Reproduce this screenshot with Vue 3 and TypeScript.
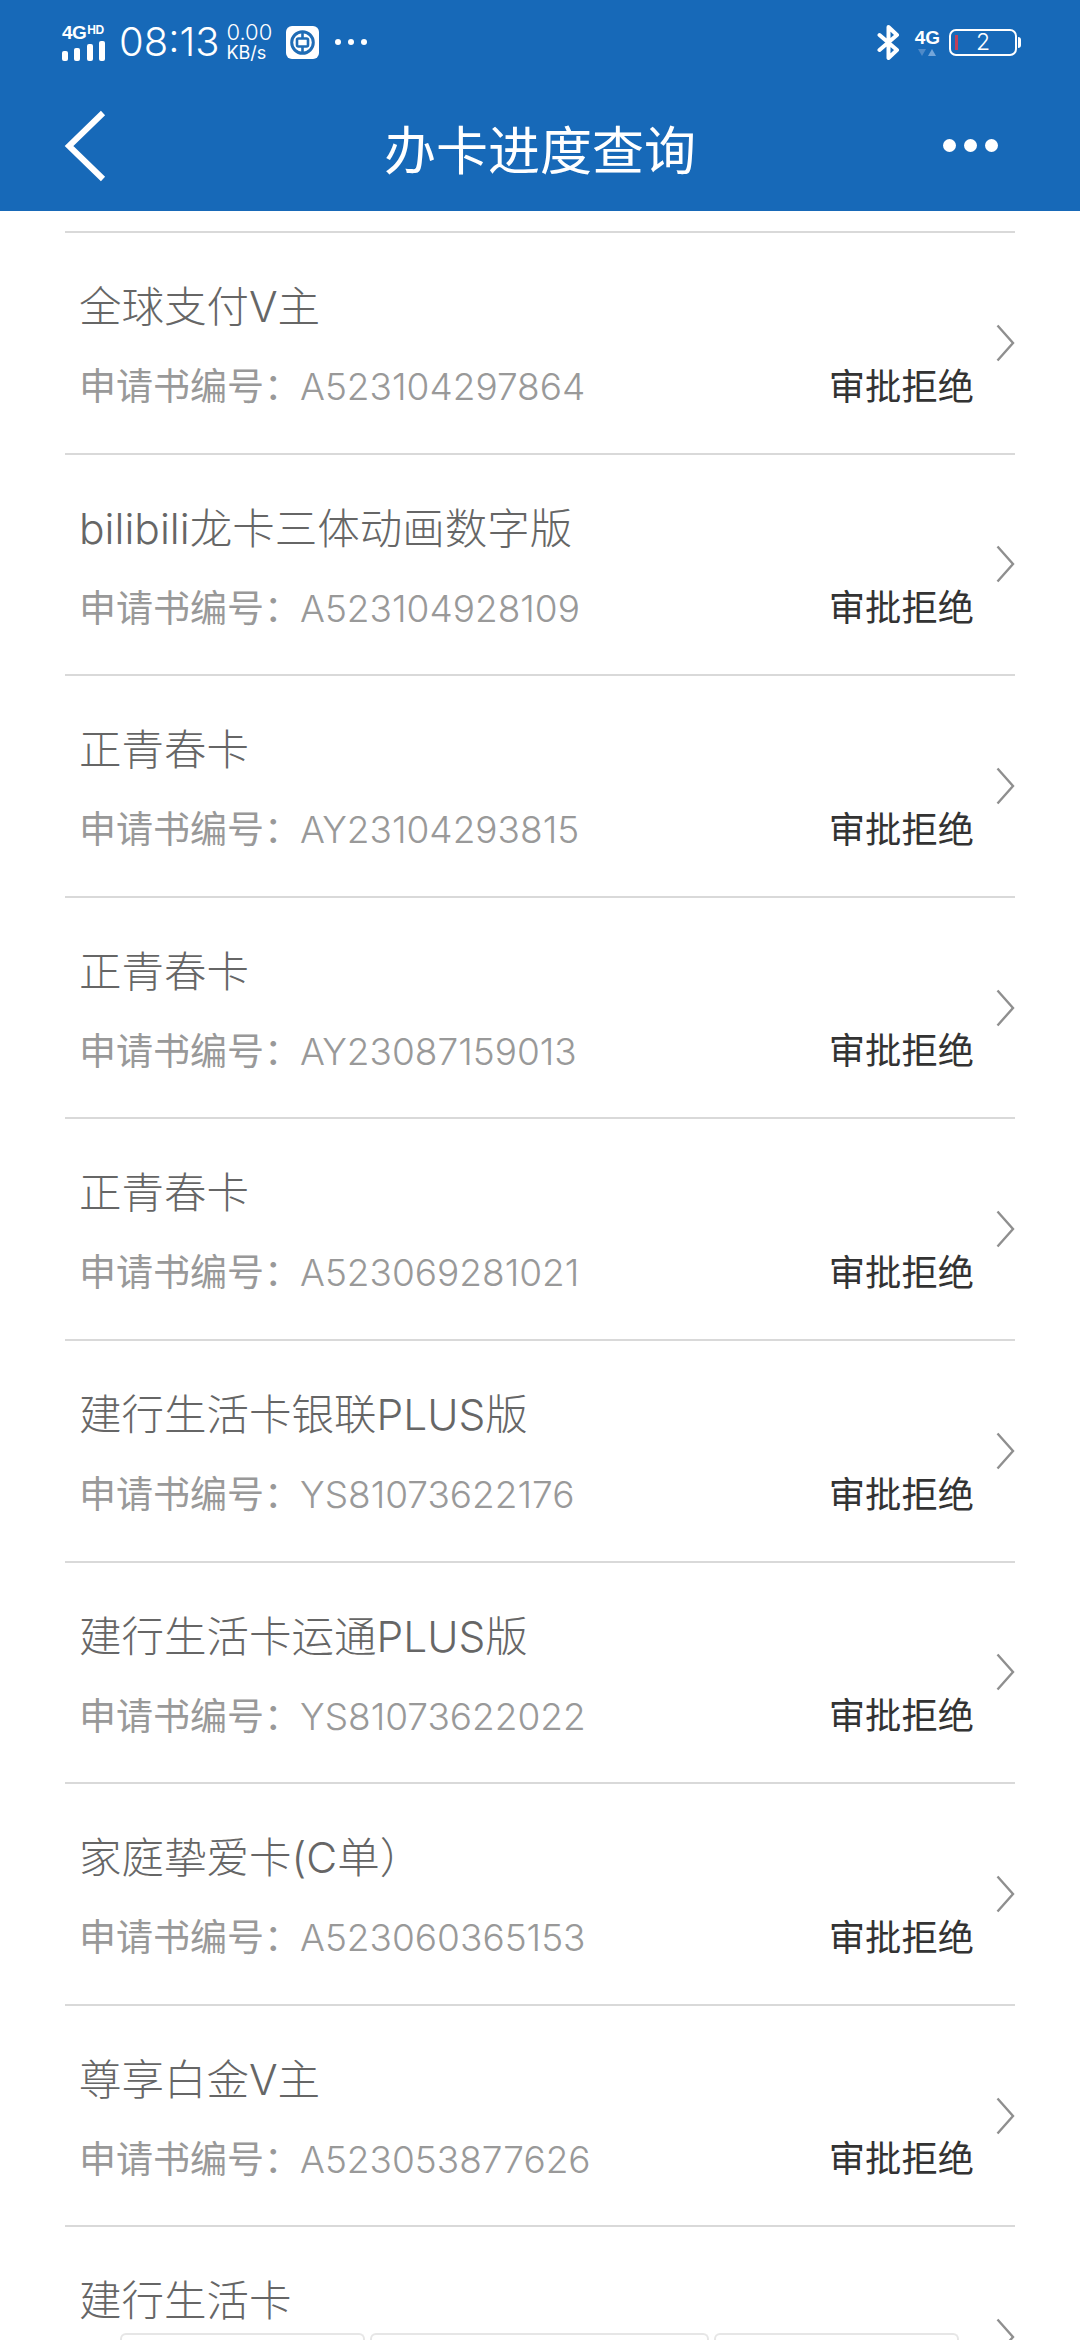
<template>
  <div class="page">
    <header class="top">
      <div class="status-bar">
        <div class="status-left">
          <div class="signal">
            <div class="net-label">4G<span class="hd">HD</span></div>
            <div class="bars">
              <i v-for="h in barHeights" :key="h" :style="{ height: h + 'px' }"></i>
            </div>
          </div>
          <span class="clock">08:13</span>
          <div class="speed">
            <span>0.00</span>
            <span class="unit">KB/s</span>
          </div>
          <svg class="bank" width="33" height="33" viewBox="0 0 33 33">
            <rect width="33" height="33" rx="6" fill="#fff" />
            <circle cx="16.5" cy="16.5" r="10.8" fill="none" stroke="#1f6cb5" stroke-width="3" />
            <rect x="11" y="12.5" width="11" height="8" rx="1.5" fill="none" stroke="#1f6cb5" stroke-width="2.6" />
            <path d="M16.5 6v6.5M16.5 20.5V27" stroke="#1f6cb5" stroke-width="2.6" />
          </svg>
          <div class="dots-small"><i></i><i></i><i></i></div>
        </div>
        <div class="status-right">
          <svg class="bt" width="23" height="35" viewBox="0 0 23 35">
            <path d="M2.5 10L20 25l-8.500 8V2L20 10 2.500 25" fill="none" stroke="#fff" stroke-width="4" stroke-linejoin="round" stroke-linecap="round" />
          </svg>
          <div class="net-4g">
            <span>4G</span>
            <svg width="18" height="7" viewBox="0 0 18 7">
              <path d="M0 0h8L4 7z" fill="#4f8ac8" />
              <path d="M10 7h8l-4-7z" fill="#74a6da" />
            </svg>
          </div>
          <div class="battery">
            <i class="level"></i>
            <span>2</span>
            <i class="cap"></i>
          </div>
        </div>
      </div>
      <div class="nav">
        <svg class="back" width="42" height="72" viewBox="0 0 42 72">
          <path d="M39 3L5 36l34 33" fill="none" stroke="#fff" stroke-width="6" />
        </svg>
        <h1>办卡进度查询</h1>
        <div class="more"><i></i><i></i><i></i></div>
      </div>
    </header>

    <main class="list">
      <div v-for="item in items" :key="item.name + item.no" class="row">
        <div class="info">
          <div class="name">{{ item.name }}</div>
          <div v-if="item.no" class="no">申请书编号：<span class="code">{{ item.no }}</span></div>
        </div>
        <div v-if="item.no" class="state">审批拒绝</div>
        <svg class="arrow" width="19" height="38" viewBox="0 0 19 38">
          <path d="M1.500 1.500L17 19 1.500 36.500" fill="none" stroke="#8f8f8f" stroke-width="2.400" />
        </svg>
      </div>
    </main>

    <div class="peek">
      <i class="tab-a"></i>
      <i class="tab-b"></i>
      <i class="tab-c"></i>
    </div>
  </div>
</template>

<script setup lang="ts">
interface ApplyItem {
  name: string
  no?: string
}

const barHeights = [10, 13, 17, 20]

const items: ApplyItem[] = [
  { name: '全球支付V主', no: 'A523104297864' },
  { name: 'bilibili龙卡三体动画数字版', no: 'A523104928109' },
  { name: '正青春卡', no: 'AY23104293815' },
  { name: '正青春卡', no: 'AY23087159013' },
  { name: '正青春卡', no: 'A523069281021' },
  { name: '建行生活卡银联PLUS版', no: 'YS81073622176' },
  { name: '建行生活卡运通PLUS版', no: 'YS81073622022' },
  { name: '家庭挚爱卡(C单）', no: 'A523060365153' },
  { name: '尊享白金V主', no: 'A523053877626' },
  // 最后一行被屏幕底部截断，只露出卡名
  { name: '建行生活卡' }
]
</script>

<style>
html,
body {
  margin: 0;
  background: #fff;
}
</style>

<style scoped>
.page {
  position: relative;
  width: 1080px;
  height: 2340px;
  overflow: hidden;
  background: #fff;
  font-family: Inter, "Noto Sans CJK SC", sans-serif;
}

.top {
  height: 211px;
  background: #1769b8;
  color: #fff;
}

.status-bar {
  display: flex;
  justify-content: space-between;
  align-items: center;
  height: 84px;
  padding: 0 63px 0 62px;
}

.status-left,
.status-right {
  display: flex;
  align-items: center;
}

.signal {
  width: 43px;
}

.net-label {
  font-family: "Liberation Sans", sans-serif;
  font-size: 19px;
  line-height: 15px;
  font-weight: 700;
  white-space: nowrap;
  letter-spacing: -0.5px;
}

.hd {
  font-size: 12px;
  margin-left: 1px;
  vertical-align: 5px;
}

.bars {
  display: flex;
  justify-content: space-between;
  align-items: flex-end;
  height: 20px;
  margin-top: 1px;
}

.bars i {
  display: block;
  width: 6px;
  background: #fff;
  border-radius: 2px;
}

.clock {
  margin-left: 14px;
  font-size: 40px;
  font-weight: 300;
  line-height: 44px;
}

.speed {
  display: flex;
  flex-direction: column;
  margin-left: 7px;
  font-size: 22px;
  font-weight: 300;
  line-height: 22px;
}

.speed .unit {
  font-size: 18px;
  font-weight: 400;
  line-height: 20px;
}

.bank {
  margin-left: 14px;
}

.dots-small {
  display: flex;
  gap: 7px;
  margin-left: 16px;
}

.dots-small i {
  width: 6px;
  height: 6px;
  background: #fff;
  border-radius: 50%;
}

.bt {
  margin-right: 15px;
}

.net-4g {
  display: flex;
  flex-direction: column;
  align-items: center;
  gap: 2px;
  margin-right: 9px;
  font-family: "Liberation Sans", sans-serif;
  font-size: 19px;
  line-height: 19px;
  font-weight: 700;
}

.net-4g svg {
  display: block;
}

.battery {
  position: relative;
  display: flex;
  align-items: center;
  justify-content: center;
  box-sizing: border-box;
  width: 68px;
  height: 27px;
  border: 2px solid #fff;
  border-radius: 7px;
  font-size: 23px;
  font-weight: 300;
}

.level {
  position: absolute;
  left: 4px;
  top: 4px;
  bottom: 4px;
  width: 3px;
  background: #c0405a;
}

.cap {
  position: absolute;
  right: -6px;
  top: 6px;
  width: 3px;
  height: 11px;
  background: #fff;
  border-radius: 0 3px 3px 0;
}

.nav {
  display: grid;
  grid-template-columns: 1fr auto 1fr;
  align-items: center;
  height: 127px;
  padding: 0 66px;
}

.nav h1 {
  margin: 0;
  font-size: 52px;
  font-weight: 400;
  line-height: 70px;
  font-family: "Noto Sans CJK SC", sans-serif;
}

.back {
  margin: -4px 0 0 -2px;
}

.more {
  display: flex;
  justify-self: end;
  gap: 8px;
  margin: -4px 16px 0 0;
}

.more i {
  width: 13px;
  height: 13px;
  background: #fff;
  border-radius: 50%;
}

.list {
  padding: 20px 65px 0;
}

.row {
  display: flex;
  align-items: center;
  height: 219.600px;
  border-top: 2.600px solid #d9d9d9;
}

.info {
  flex: 1;
  align-self: flex-start;
  padding: 46px 0 0 14px;
  min-width: 0;
}

.name {
  font-size: 42.500px;
  font-weight: 300;
  line-height: 56px;
  color: #666;
  white-space: nowrap;
}

.no {
  margin-top: 27px;
  font-size: 37px;
  line-height: 50px;
  color: #999;
  white-space: nowrap;
}

.code {
  margin-left: -1px;
  font-weight: 300;
}

.state {
  align-self: flex-end;
  margin-bottom: 41px;
  font-size: 36.300px;
  line-height: 50px;
  color: #333;
}

.arrow {
  margin-left: 22px;
}

.peek {
  position: absolute;
  left: 120px;
  bottom: 0;
  display: flex;
  gap: 5px;
}

.peek i {
  height: 5px;
  border: 2px solid #e6e6e6;
  border-bottom: 0;
  border-radius: 6px 6px 0 0;
}

.tab-a,
.tab-c {
  width: 241px;
}

.tab-b {
  width: 335px;
}
</style>
